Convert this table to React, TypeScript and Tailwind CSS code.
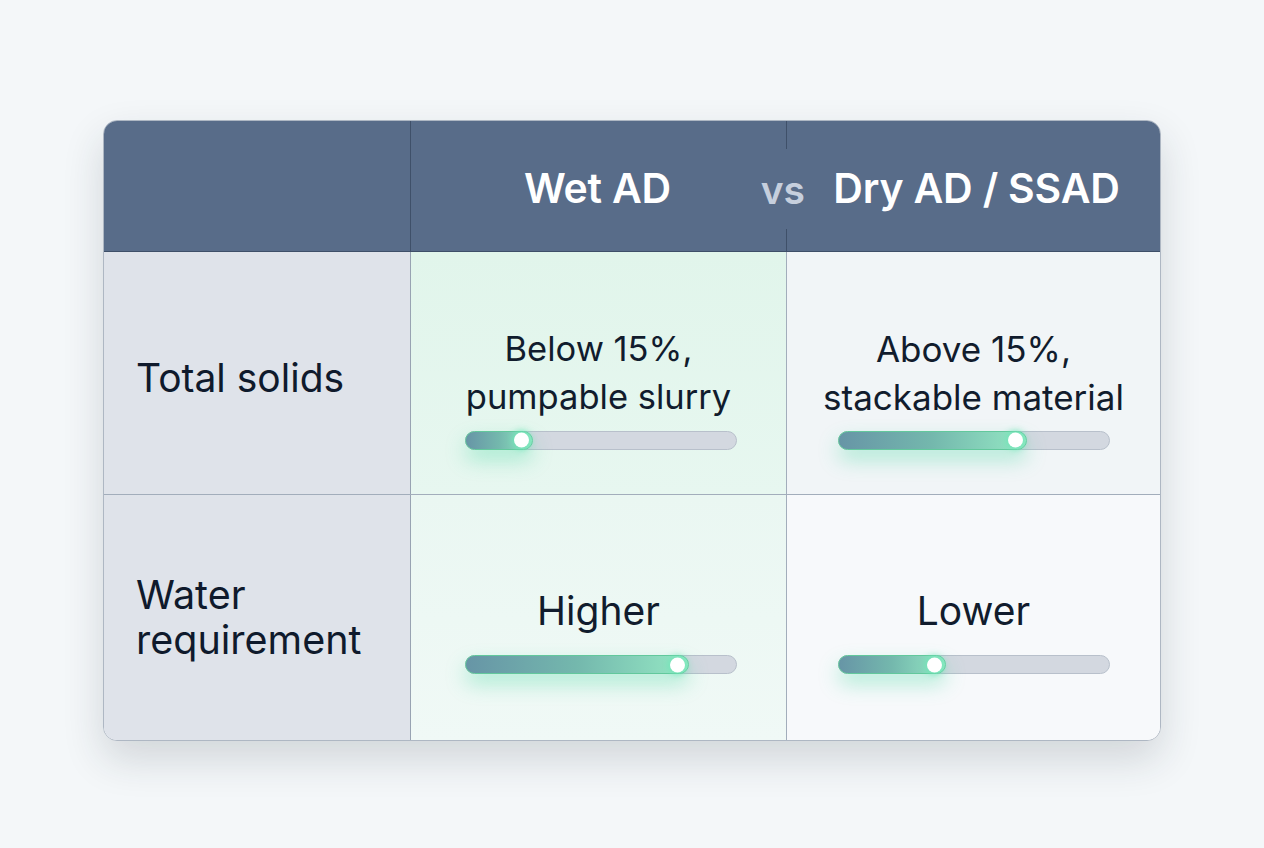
import React from "react";

function Bar({ pct }: { pct: number }) {
  return (
    <div className="relative w-[272px] h-[19px] rounded-full bg-[#d3d8e0] border border-[#b8c0cb]">
      <div
        className="absolute left-[-1px] top-[-1px] bottom-[-1px] rounded-full border border-[#62c89c] bg-gradient-to-r from-[#6795a6] via-[#74b8ad] to-[#95e8c4] shadow-[0_10px_20px_rgba(52,211,153,0.35)]"
        style={{ width: `${pct}%` }}
      >
        <div className="absolute right-[3px] top-1/2 -translate-y-1/2 w-[15px] h-[15px] rounded-full bg-white shadow-[0_0_6px_2px_rgba(110,231,183,0.9)]" />
      </div>
    </div>
  );
}

export default function App() {
  return (
    <div
      className="w-[1264px] h-[848px] bg-[#f4f7f9] flex items-start justify-center pt-[120px]"
      style={{ fontFamily: "Inter, 'Noto Sans', sans-serif" }}
    >
      <div className="w-[1058px] rounded-[14px] border border-[#aeb7c3] overflow-hidden shadow-[0_18px_40px_rgba(30,41,59,0.16)] bg-white">
        {/* header */}
        <div className="grid grid-cols-[307px_376px_1fr] h-[131px] bg-[#586c89] border-b border-[#3e4f68]">
          <div className="border-r border-[#3f5069]" />
          <div className="relative flex items-center justify-center border-r border-[#3f5069] pt-[6px]">
            <span className="text-white font-semibold text-[41px] tracking-[-0.2px] mr-[2px]">Wet AD</span>
            <span className="absolute right-[-20px] top-1/2 -translate-y-1/2 mt-[3px] h-[80px] px-[1px] flex items-center bg-[#586c89] text-[#c6cfdd] font-semibold text-[39px] leading-none">
              vs
            </span>
          </div>
          <div className="flex items-center justify-center pl-[6px] pt-[6px]">
            <span className="text-white font-semibold text-[41px] tracking-[-0.2px]">Dry AD / SSAD</span>
          </div>
        </div>
        {/* row 1 */}
        <div className="grid grid-cols-[307px_376px_1fr] h-[243px] border-b border-[#a2adbb]">
          <div className="bg-[#dfe3ea] border-r border-[#98a3b2] flex items-center pl-[32px] pt-[10px] text-[39px] text-[#0f1a2c]">
            Total solids
          </div>
          <div className="bg-gradient-to-b from-[#e1f5eb] to-[#e7f7f0] border-r border-[#a2adbb] flex flex-col items-center justify-center pt-[28px]">
            <div className="text-[34.5px] leading-[48px] text-center text-[#111c2d]">
              Below 15%,
              <br />
              pumpable slurry
            </div>
            <div className="mt-[10px] ml-[4px]">
              <Bar pct={25.5} />
            </div>
          </div>
          <div className="bg-[#f1f5f7] flex flex-col items-center justify-center pt-[28px]">
            <div className="text-[35px] leading-[48px] text-center text-[#111c2d]">
              Above 15%,
              <br />
              stackable material
            </div>
            <div className="mt-[10px]">
              <Bar pct={70} />
            </div>
          </div>
        </div>
        {/* row 2 */}
        <div className="grid grid-cols-[307px_376px_1fr] h-[245px]">
          <div className="bg-[#dfe3ea] border-r border-[#98a3b2] flex items-center pl-[32px] text-[39.5px] leading-[45px] text-[#0f1a2c]">
            Water
            <br />
            requirement
          </div>
          <div className="bg-gradient-to-b from-[#eaf7f2] to-[#f0f9f6] border-r border-[#a2adbb] flex flex-col items-center justify-center pt-[26px]">
            <div className="text-[39px] leading-[48px] text-center text-[#111c2d]">Higher</div>
            <div className="mt-[20px] ml-[4px]">
              <Bar pct={83} />
            </div>
          </div>
          <div className="bg-[#f7f9fb] flex flex-col items-center justify-center pt-[26px]">
            <div className="text-[39px] leading-[48px] text-center text-[#111c2d]">Lower</div>
            <div className="mt-[20px]">
              <Bar pct={40} />
            </div>
          </div>
        </div>
      </div>
    </div>
  );
}
